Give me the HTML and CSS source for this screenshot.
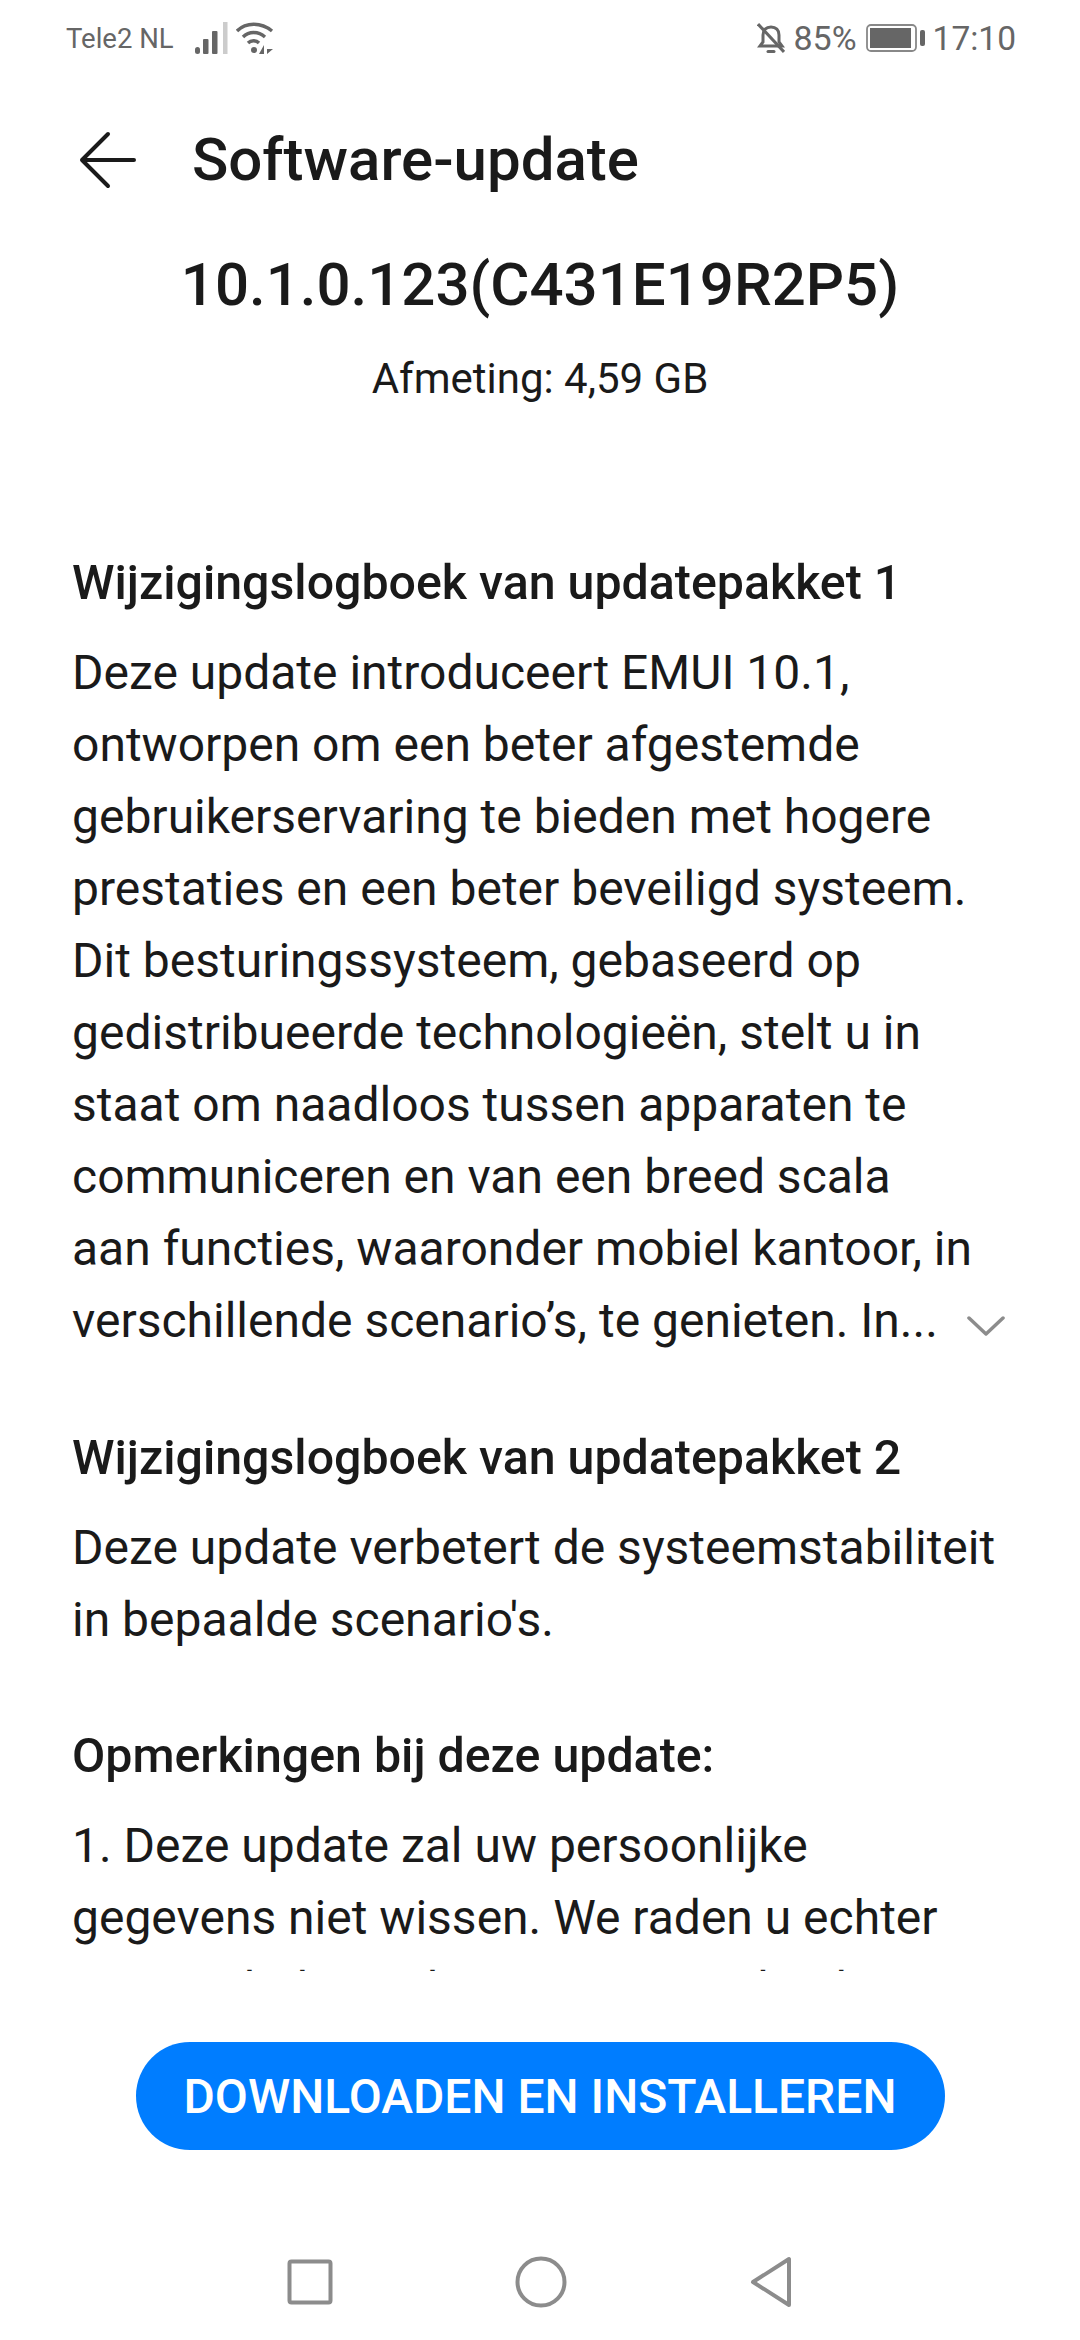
FILE: index.html
```html
<!DOCTYPE html>
<html lang="nl">
<head>
<meta charset="utf-8">
<title>Software-update</title>
<link rel="stylesheet" href="styles.css">
</head>
<body>
<div class="phone">
  <div class="status">
    <div class="status-left">
      <span class="carrier">Tele2 NL</span>
      <svg class="ic-signal" width="33" height="32" viewBox="0 0 33 32"><g fill="#666"><rect x="0" y="25" width="5" height="7" rx="2.500"/><rect x="8" y="17" width="5.500" height="15" rx="1"/><rect x="17" y="9" width="5.500" height="23" rx="1"/></g><rect x="28" y="0" width="4.500" height="32" fill="#ccc"/></svg>
      <svg class="ic-wifi" width="38" height="32" viewBox="0 0 38 32"><g fill="none" stroke="#666" stroke-width="3.400"><path d="M1 9 C10 0 25 0 36 9"/><path d="M7 15 C13 9 22 9 29 15"/><path d="M12 21 C15 18 20 18 23 21"/></g><circle cx="18" cy="28" r="3" fill="#666"/><path d="M28 23 V32 H23 Z M31 23 V32 L37 27 H31 Z" fill="#666"/></svg>
    </div>
    <div class="status-right">
      <svg class="ic-bell" width="28" height="31" viewBox="0 0 28 31"><g fill="none" stroke="#666" stroke-width="3"><path d="M6 12 C6 7 9 4 14 4 C19 4 22 7 22 12 V19 L25 23 H3 L6 19 Z"/><path d="M1 1 L27 29"/><path d="M11 28.500 H17" stroke-linecap="round"/></g></svg>
      <span class="pct">85%</span>
      <svg class="ic-batt" width="59" height="28" viewBox="0 0 59 28"><rect x="1" y="1" width="49" height="26" rx="4" fill="none" stroke="#888" stroke-width="1.800"/><rect x="4" y="4" width="41" height="20" fill="#666"/><rect x="54" y="6" width="5" height="16" rx="2" fill="#666"/></svg>
      <span class="time">17:10</span>
    </div>
  </div>

  <header class="topbar">
    <svg class="ic-back" width="60" height="58" viewBox="0 0 60 58"><path d="M30 3 L4 29 L30 55 M4 29 H56" fill="none" stroke="#1a1a1a" stroke-width="4" stroke-linecap="round" stroke-linejoin="round"/></svg>
    <h1 class="page-title">Software-update</h1>
  </header>

  <div class="version">10.1.0.123(C431E19R2P5)</div>
  <div class="size">Afmeting: 4,59 GB</div>

  <main class="scroll">
    <section class="block first">
      <h2 class="heading">Wijzigingslogboek van updatepakket 1</h2>
      <div class="more-wrap">
        <p class="line">Deze update introduceert EMUI 10.1,</p>
        <p class="line">ontworpen om een beter afgestemde</p>
        <p class="line">gebruikerservaring te bieden met hogere</p>
        <p class="line">prestaties en een beter beveiligd systeem.</p>
        <p class="line">Dit besturingssysteem, gebaseerd op</p>
        <p class="line">gedistribueerde technologieën, stelt u in</p>
        <p class="line">staat om naadloos tussen apparaten te</p>
        <p class="line">communiceren en van een breed scala</p>
        <p class="line">aan functies, waaronder mobiel kantoor, in</p>
        <div class="last-row">
          <p class="line">verschillende scenario’s, te genieten. In...</p>
          <svg class="ic-chev" width="38" height="22" viewBox="0 0 38 22"><path d="M2 3 L19 19 L36 3" fill="none" stroke="#8c8c8c" stroke-width="3.500" stroke-linecap="round" stroke-linejoin="round"/></svg>
        </div>
      </div>
    </section>
    <section class="block">
      <h2 class="heading">Wijzigingslogboek van updatepakket 2</h2>
      <p class="line">Deze update verbetert de systeemstabiliteit</p>
      <p class="line">in bepaalde scenario's.</p>
    </section>
    <section class="block last">
      <h2 class="heading">Opmerkingen bij deze update:</h2>
      <p class="line">1. Deze update zal uw persoonlijke</p>
      <p class="line">gegevens niet wissen. We raden u echter</p>
      <p class="line">aan om belangrijke gegevens te back-uppen</p>
    </section>
  </main>

  <div class="action">
    <button class="primary">DOWNLOADEN EN INSTALLEREN</button>
  </div>

  <nav class="navbar">
    <svg width="46" height="48" viewBox="0 0 46 48"><rect x="2.500" y="3.500" width="41" height="41" rx="2" fill="none" stroke="#8c8c8c" stroke-width="4"/></svg>
    <svg width="52" height="52" viewBox="0 0 52 52"><circle cx="26" cy="26" r="23.500" fill="none" stroke="#8c8c8c" stroke-width="4"/></svg>
    <svg width="42" height="52" viewBox="0 0 42 52"><path d="M39 3 V49 L3 26 Z" fill="none" stroke="#8c8c8c" stroke-width="4" stroke-linejoin="round"/></svg>
  </nav>
</div>
</body>
</html>
```
FILE: styles.css
```css
* { box-sizing: border-box; margin: 0; padding: 0; }
html, body { background: #fff; }
body { font-family: Roboto, "Noto Sans", sans-serif; color: #1a1a1a; }
.phone { width: 1080px; height: 2340px; display: flex; flex-direction: column; overflow: hidden; }
.status { height: 76px; padding: 0 64px 0 66px; display: flex; justify-content: space-between; align-items: center; color: #666; }
.status-left, .status-right { display: flex; align-items: center; }
.carrier { font-size: 27.500px; margin-right: 21px; }
.ic-wifi { margin-left: 8px; }
.pct { font-size: 34px; margin-left: 8px; }
.ic-batt { margin-left: 9px; }
.time { font-size: 33.500px; margin-left: 8px; }
.topbar { height: 94px; margin-top: 37px; display: flex; align-items: center; padding-left: 78px; }
.page-title { font-size: 60px; font-weight: 500; margin-left: 54px; line-height: 1; }
.version { margin-top: 43px; text-align: center; font-size: 60px; font-weight: 500; line-height: 70px; }
.size { margin-top: 34px; text-align: center; font-size: 42px; line-height: 50px; }
.scroll { height: 1567px; padding: 0 72px; overflow: hidden; flex: none; }
.block { margin-top: 73px; }
.block.first { margin-top: 151px; }
.block.last { margin-top: 72px; }
.heading { font-size: 48.300px; font-weight: 500; line-height: 56px; margin-bottom: 26px; }
.line { font-size: 48px; line-height: 72px; white-space: nowrap; }
.last-row { display: flex; align-items: center; }
.ic-chev { margin-left: 29px; margin-top: 9px; }
.action { display: flex; justify-content: center; }
.primary { width: 809px; height: 108px; margin-top: 71px; border: 0; border-radius: 54px; background: #007dff; color: #fff; font: 500 48px Roboto, sans-serif; }
.navbar { margin-top: 106px; padding-left: 287px; display: flex; align-items: center; }
.navbar svg:nth-child(2) { margin-left: 182px; }
.navbar svg:nth-child(3) { margin-left: 183px; }
```
